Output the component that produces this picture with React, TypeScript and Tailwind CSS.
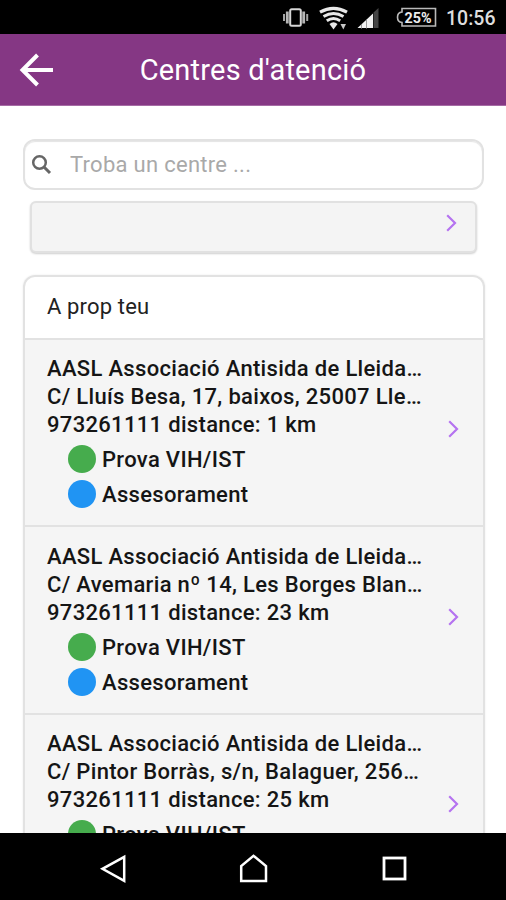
import React from "react";

type Service = { name: string; dot: string };

type Centre = {
  lines: string[];
  services: Service[];
  box: string;
};

const testing: Service = { name: "Prova VIH/IST", dot: "bg-[#46ac4d]" };
const advice: Service = { name: "Assesorament", dot: "bg-[#2094f3]" };

const centres: Centre[] = [
  {
    lines: [
      "AASL Associació Antisida de Lleida…",
      "C/ Lluís Besa, 17, baixos, 25007 Lle…",
      "973261111 distance: 1 km",
    ],
    services: [testing, advice],
    box: "h-[187px] pt-[15px]",
  },
  {
    lines: [
      "AASL Associació Antisida de Lleida…",
      "C/ Avemaria nº 14, Les Borges Blan…",
      "973261111 distance: 23 km",
    ],
    services: [testing, advice],
    box: "h-[188px] pt-[16px]",
  },
  {
    lines: [
      "AASL Associació Antisida de Lleida…",
      "C/ Pintor Borràs, s/n, Balaguer, 256…",
      "973261111 distance: 25 km",
    ],
    services: [testing],
    box: "h-[188px] pt-[15px]",
  },
];

function Chevron() {
  return (
    <svg className="h-[20px] w-[12px] shrink-0" viewBox="0 0 12 20" fill="none" stroke="#b573f0" strokeWidth="2.2">
      <path d="M1.2 2.2 L9 10 L1.2 17.8" />
    </svg>
  );
}

function StatusBar() {
  return (
    <header className="h-[34px] shrink-0 bg-black">
      <svg className="block h-[34px] w-full" viewBox="0 0 506 34" fill="none">
        <rect x="290.2" y="9.3" width="10.600" height="16.400" rx="1.5" stroke="#d6d6d6" strokeWidth="2" />
        <path d="M287.300 11.500v12M303.700 11.500v12" stroke="#b5b5b5" strokeWidth="2.800" />
        <path d="M284 14v7M307.200 14v7" stroke="#a5a5a5" strokeWidth="2" />
        <path d="M320 12.200q13.500-7.500 27 0" stroke="#e8e8e8" strokeWidth="3.200" />
        <path d="M323.500 16.500q10-6 20 0" stroke="#e8e8e8" strokeWidth="3" />
        <path d="M326.800 20.700q6.700-4.500 13.400 0" stroke="#e8e8e8" strokeWidth="3" />
        <path d="M329.500 24q4-3.500 8 0L333.500 29.500z" fill="#e8e8e8" />
        <path d="M340.500 24h5.500l-2.700 5.500z" fill="#c8c8c8" />
        <path d="M357.500 28L373 13.500V28z" fill="#f2f2f2" />
        <path d="M361.500 24v5M366.500 19v10" stroke="#777" strokeWidth="0.700" />
        <path d="M373.500 12.500L378.500 8V28H373.500z" fill="#454545" />
        <path d="M402 8.500H435.500V26H402V22.500Q397.500 22 397.500 17.200Q397.500 12.500 402 12z" stroke="#b9b9b9" strokeWidth="1.600" />
        <text x="404.500" y="22.800" textLength="27" lengthAdjust="spacingAndGlyphs" className="fill-[#ededed] font-['Roboto',sans-serif] text-[15px] font-bold">25%</text>
        <text x="446" y="25" textLength="49.500" lengthAdjust="spacingAndGlyphs" className="fill-[#dedede] font-['Roboto',sans-serif] text-[20px] font-medium">10:56</text>
      </svg>
    </header>
  );
}

function TitleBar() {
  return (
    <div className="grid h-[72px] shrink-0 grid-cols-[53px_1fr_53px] items-center border-b border-[#a56ba4] bg-[#853784] text-white">
      <svg className="ml-[19px] h-[36px] w-[36px]" viewBox="0 0 36 36" fill="none" stroke="currentColor" strokeWidth="4">
        <path d="M18.500 3L3.500 18L18.500 33M4 18H34" />
      </svg>
      <h1 className="text-center text-[29px] leading-[36px] tracking-[0.220px]">Centres d'atenció</h1>
    </div>
  );
}

function CentreRow({ centre }: { centre: Centre }) {
  return (
    <li className={"flex shrink-0 border-t-2 border-[#e2e2e2] bg-[#f5f5f5] pl-[22px] pr-[23px] " + centre.box}>
      <div className="min-w-0 flex-1 whitespace-nowrap text-[22px] font-medium leading-[28px] tracking-[0.320px] text-[#151515]">
        {centre.lines.map((line) => (
          <p key={line}>{line}</p>
        ))}
        <div className="ml-[21px] mt-[6px] flex flex-col gap-[7px]">
          {centre.services.map((service) => (
            <div key={service.name} className="flex h-[28px] gap-[6px]">
              <span className={"size-[28px] rounded-full " + service.dot} />
              <span className="pt-px">{service.name}</span>
            </div>
          ))}
        </div>
      </div>
      <div className="mt-[64px]">
        <Chevron />
      </div>
    </li>
  );
}

function NavBar() {
  return (
    <nav className="grid h-[67px] shrink-0 grid-cols-[43px_140px_140px_141px_42px] items-center justify-items-center bg-black pt-[4px] text-white">
      <span />
      <svg className="h-[32px] w-[30px]" viewBox="0 0 30 32" fill="none" stroke="currentColor" strokeWidth="2.500">
        <path d="M26.200 3.800V27.800L4.500 15.800z" />
      </svg>
      <svg className="h-[32px] w-[30px]" viewBox="0 0 30 32" fill="none" stroke="currentColor" strokeWidth="2.500">
        <path d="M3.200 28V13L15.500 2.800L28 13V28z" />
      </svg>
      <svg className="h-[32px] w-[30px]" viewBox="0 0 30 32" fill="none" stroke="currentColor" strokeWidth="2.800">
        <rect x="5" y="5" width="21" height="21" />
      </svg>
      <span />
    </nav>
  );
}

export default function App() {
  return (
    <div className="flex h-[900px] w-[506px] flex-col overflow-hidden bg-white font-['Roboto',sans-serif]">
      <StatusBar />
      <TitleBar />
      <main className="flex min-h-0 flex-1 flex-col overflow-hidden px-[23px] pt-[33px]">
        <label className="flex h-[51px] w-[461px] shrink-0 items-center rounded-[12px] border-2 border-[#e2e2e2] pl-[6px] shadow-[inset_0_1px_1px_#e4e4e4]">
          <svg className="mr-[17px] size-[22px]" viewBox="0 0 22 22" fill="none" stroke="#666666">
            <circle cx="8.500" cy="8.500" r="6.300" strokeWidth="2.500" />
            <path d="M13 13L19 19" strokeWidth="3" />
          </svg>
          <input
            className="min-w-0 flex-1 bg-transparent text-[22px] tracking-[0.280px] outline-none placeholder:text-[#a9a9a9]"
            placeholder="Troba un centre ..."
          />
        </label>
        <button className="ml-[7px] mt-[11px] flex h-[52px] w-[447px] shrink-0 justify-end rounded-[6px] border-2 border-[#e1e1e1] bg-[#f4f4f4] pr-[17px] pt-[10px] shadow-[0_1px_2px_#cfcfcf]">
          <Chevron />
        </button>
        <section className="mt-[22px] w-[462px] shrink-0 overflow-hidden rounded-t-[12px] border-2 border-b-0 border-[#e2e2e2] shadow-[0_0_2px_#e8e8e8]">
          <h2 className="h-[61px] pl-[22px] pt-[16px] text-[22px] leading-[28px] tracking-[0.150px] text-[#222222]">
            A prop teu
          </h2>
          <ul>
            {centres.map((centre) => (
              <CentreRow key={centre.lines[1]} centre={centre} />
            ))}
          </ul>
        </section>
      </main>
      <NavBar />
    </div>
  );
}
